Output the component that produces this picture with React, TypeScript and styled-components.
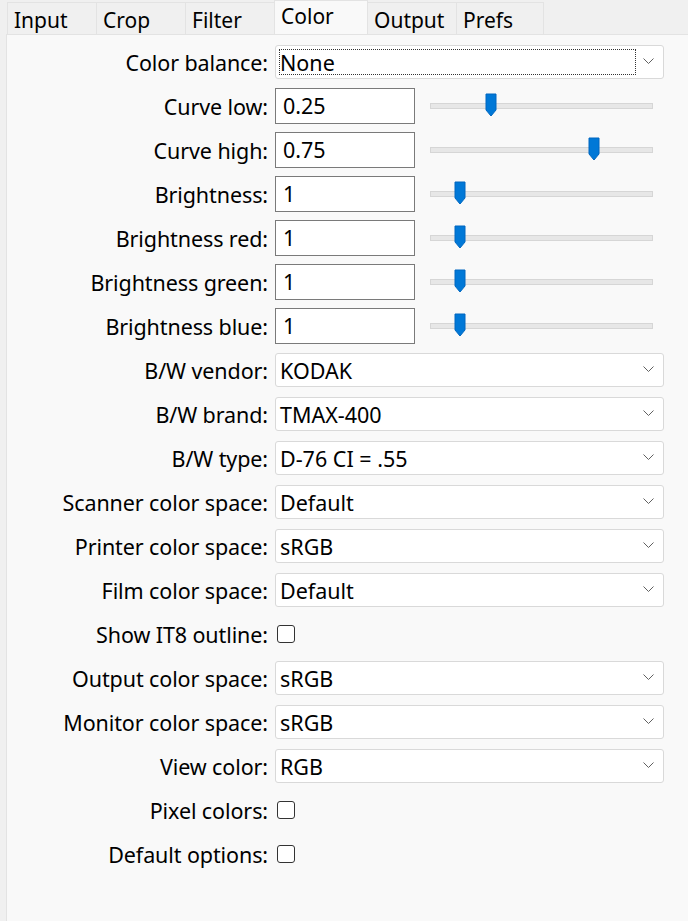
import React from "react";
import styled, { createGlobalStyle } from "styled-components";

const G = createGlobalStyle`
  body { margin:0; background:#f0f0f0; font-family:"Segoe UI","Noto Sans","Open Sans",sans-serif; color:#000; }
`;
const Page = styled.div`width:688px;height:921px;display:flex;flex-direction:column;`;
const Tabs = styled.div`display:flex;height:34px;padding-left:8px;align-items:flex-end;`;
const Tab = styled.div<{ $sel?: boolean; $w: number }>`
  width:${p => p.$w}px;height:${p => (p.$sel ? 34 : 32)}px;box-sizing:border-box;
  border:1px solid #e3e3e3;border-bottom:none;margin-left:-1px;
  background:${p => (p.$sel ? "#f9f9f9" : "#f0f0f0")};
  font-size:21px;padding-left:6px;line-height:${p => (p.$sel ? 30 : 34)}px;
`;
const Panel = styled.div`
  flex:1;margin-left:6px;background:#f9f9f9;border-left:1px solid #e3e3e3;border-top:1px solid #e3e3e3;
  padding-top:9px;display:flex;flex-direction:column;gap:8px;
`;
const Row = styled.div`display:grid;grid-template-columns:261px 1fr;column-gap:7px;align-items:center;min-height:36px;`;
const Label = styled.div`text-align:right;font-size:21.5px;letter-spacing:-0.1px;`;
const Combo = styled.div<{ $focus?: boolean }>`
  width:389px;height:34px;box-sizing:border-box;background:#fff;border:1px solid #d9d9d9;border-radius:3px;
  display:flex;align-items:center;position:relative;font-size:21.5px;padding-left:4px;
  ${p => p.$focus ? `&::before{content:"";position:absolute;left:3px;top:3px;right:27px;bottom:3px;border:1px dotted #333;}` : ""}
`;
const Chev = styled.svg`position:absolute;right:9px;top:12px;`;
const Field = styled.div`display:flex;align-items:center;gap:15px;`;
const Input = styled.div`
  width:140px;height:36px;box-sizing:border-box;background:#fff;border:1px solid #7a7a7a;
  font-size:21.5px;padding-left:7px;line-height:34px;
`;
const Track = styled.div`width:223px;height:6px;background:#e7e7e7;border:1px solid #d6d6d6;box-sizing:border-box;position:relative;`;
const Thumb = styled.svg`position:absolute;top:-11px;`;
const Check = styled.div`width:18px;height:18px;box-sizing:border-box;border:1px solid #333;border-radius:3px;background:#fff;margin-left:2px;`;

const chev = (
  <Chev width="11" height="7" viewBox="0 0 11 7"><path d="M0.5 0.5L5.5 5.5L10.5 0.5" fill="none" stroke="#606060" strokeWidth="1" /></Chev>
);

const sliders: [string, string, number][] = [
  ["Curve low:", "0.25", 54],
  ["Curve high:", "0.75", 157],
  ["Brightness:", "1", 23],
  ["Brightness red:", "1", 23],
  ["Brightness green:", "1", 23],
  ["Brightness blue:", "1", 23],
];
type R = { l: string; v?: string; c?: boolean };
const rows: R[] = [
  { l: "B/W vendor:", v: "KODAK" },
  { l: "B/W brand:", v: "TMAX-400" },
  { l: "B/W type:", v: "D-76 CI = .55" },
  { l: "Scanner color space:", v: "Default" },
  { l: "Printer color space:", v: "sRGB" },
  { l: "Film color space:", v: "Default" },
  { l: "Show IT8 outline:", c: true },
  { l: "Output color space:", v: "sRGB" },
  { l: "Monitor color space:", v: "sRGB" },
  { l: "View color:", v: "RGB" },
  { l: "Pixel colors:", c: true },
  { l: "Default options:", c: true },
];

export default function App() {
  return (
    <Page>
      <G />
      <Tabs>
        <Tab $w={90}>Input</Tab><Tab $w={90}>Crop</Tab><Tab $w={90}>Filter</Tab>
        <Tab $w={94} $sel>Color</Tab><Tab $w={90}>Output</Tab><Tab $w={88}>Prefs</Tab>
      </Tabs>
      <Panel>
        <Row><Label>Color balance:</Label><Combo $focus>None{chev}</Combo></Row>
        {sliders.map(([l, v, x]) => (
          <Row key={l}><Label>{l}</Label>
            <Field><Input>{v}</Input>
              <Track><Thumb style={{ left: x }} width="12" height="24" viewBox="0 0 12 24"><path d="M1 1H11V17L6 23L1 17Z" fill="#0078d7" stroke="#0067c0" strokeWidth="1" /></Thumb></Track>
            </Field>
          </Row>
        ))}
        {rows.map(r => (
          <Row key={r.l}><Label>{r.l}</Label>{r.c ? <Check /> : <Combo>{r.v}{chev}</Combo>}</Row>
        ))}
      </Panel>
    </Page>
  );
}
